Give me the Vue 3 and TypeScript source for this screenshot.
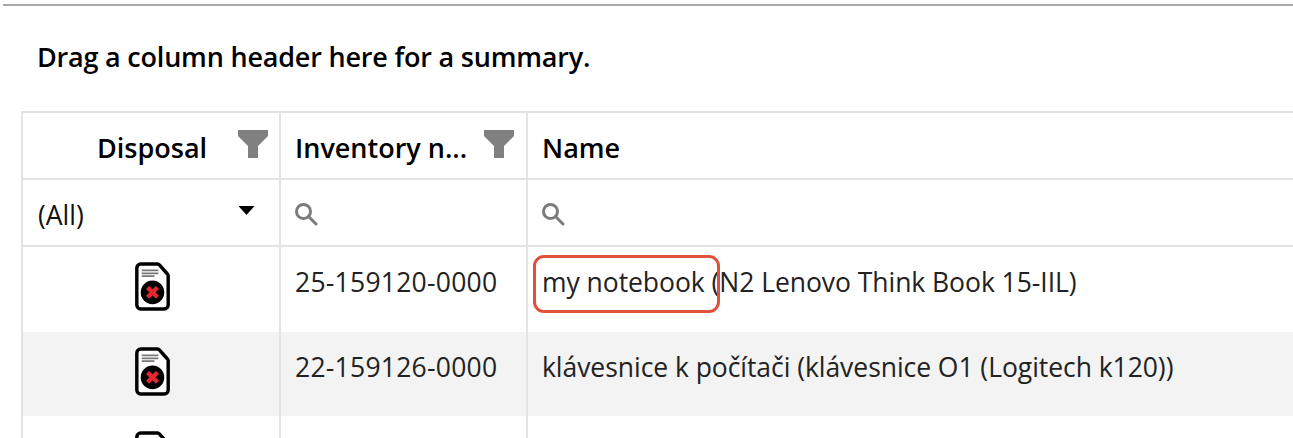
<script setup lang="ts">
interface Row {
  inventory: string;
  name: string;
  marked?: string;
}

const rows: Row[] = [
  { inventory: "25-159120-0000", marked: "my notebook", name: " (N2 Lenovo Think Book 15-IIL)" },
  { inventory: "22-159126-0000", name: "klávesnice k počítači (klávesnice O1 (Logitech k120))" },
  { inventory: "", name: "" },
];
</script>

<template>
  <div class="page">
    <div class="top-rule" />
    <div class="group-panel">Drag a column header here for a summary.</div>

    <div class="grid">
      <div class="cell head head--center">
        <span class="head__label">Disposal</span>
        <svg class="funnel" viewBox="0 0 30 30"><path d="M0 1h30v6L20 17v12H10V17L0 7z" /></svg>
      </div>
      <div class="cell head">
        <span class="head__label">Inventory n...</span>
        <svg class="funnel" viewBox="0 0 30 30"><path d="M0 1h30v6L20 17v12H10V17L0 7z" /></svg>
      </div>
      <div class="cell head head--last"><span class="head__label">Name</span></div>

      <div class="cell filter filter--select">
        <span class="filter__all">(All)</span>
        <svg class="caret" viewBox="0 0 16 9"><path d="M0 0h16L8 9z" /></svg>
      </div>
      <div class="cell filter">
        <svg class="search" viewBox="0 0 24 24"><circle cx="9.5" cy="9.5" r="7" /><path d="M14.5 14.5L22 22" /></svg>
      </div>
      <div class="cell filter filter--last">
        <svg class="search" viewBox="0 0 24 24"><circle cx="9.5" cy="9.5" r="7" /><path d="M14.5 14.5L22 22" /></svg>
      </div>

      <template v-for="(row, i) in rows" :key="i">
        <div class="cell body body--icon" :class="{ alt: i === 1 }">
          <svg class="doc" viewBox="0 0 36 50">
            <path class="doc__sheet" d="M6 2h17a3 3 0 0 1 2 1l8 9a3 3 0 0 1 1 2v30a4 4 0 0 1-4 4H6a4 4 0 0 1-4-4V6a4 4 0 0 1 4-4z" />
            <path class="doc__lines" d="M7 8.500h17M7 11.500h17M7 14.500h13" />
            <circle cx="18" cy="31" r="12" />
            <path class="doc__cross" d="M13 26l10 10M23 26L13 36" />
          </svg>
        </div>
        <div class="cell body body--code" :class="{ alt: i === 1 }">{{ row.inventory }}</div>
        <div class="cell body body--last" :class="{ alt: i === 1 }">
          <span class="name"><span v-if="row.marked">{{ row.marked }}</span>{{ row.name }}</span>
          <span v-if="row.marked" class="callout" />
        </div>
      </template>
    </div>
  </div>
</template>

<style>
html,
body {
  margin: 0;
  background: #fff;
  overflow: hidden;
}
</style>

<style scoped>
.page {
  width: 1293px;
  height: 438px;
  overflow: hidden;
  background: #fff;
  color: #111;
  font-family: "Open Sans", "Noto Sans", sans-serif;
}

.top-rule {
  height: 2px;
  margin: 4px 0 0 3px;
  background: #a9a9a9;
}

.group-panel {
  padding: 0 0 0 37px;
  height: 105px;
  line-height: 101px;
  font-size: 27px;
  font-weight: 600;
  letter-spacing: -0.2px;
  color: #000;
}

.grid {
  display: grid;
  grid-template-columns: 258px 247px 766px;
  grid-template-rows: 67px 67px 85px 84px 60px;
  margin-left: 21px;
  border-top: 2px solid #e3e3e3;
  border-left: 2px solid #e3e3e3;
}

.cell {
  display: flex;
  align-items: center;
  box-sizing: border-box;
  border-right: 2px solid #e3e3e3;
  min-width: 0;
}

.head,
.filter {
  border-bottom: 2px solid #e3e3e3;
}

.head--last,
.filter--last,
.body--last {
  border-right: 0;
}

.head {
  padding: 3px 12px 0 14px;
  justify-content: space-between;
  font-size: 27px;
  font-weight: 600;
  color: #000;
}

.head--center {
  padding-left: 74px;
  padding-right: 11px;
}

.funnel {
  flex: none;
  width: 30px;
  height: 30px;
  margin-top: -6px;
  fill: #808080;
}

.filter {
  padding: 4px 13px 0;
  font-size: 26.500px;
}

.filter--select {
  padding-left: 15px;
  padding-right: 24px;
}

.filter__all {
  flex: 1;
}

.caret {
  flex: none;
  width: 17px;
  height: 9px;
  margin-top: -8px;
  fill: #000;
}

.search {
  width: 24px;
  height: 24px;
  margin-top: -2px;
  fill: none;
  stroke: #7b7b7b;
  stroke-width: 3;
  stroke-linecap: round;
}

.body {
  position: relative;
  align-items: flex-start;
  padding: 17px 14px 0;
  font-size: 26.500px;
  line-height: 36px;
  letter-spacing: -0.05px;
  white-space: pre;
  color: #222;
}

.body--code {
  letter-spacing: 0.25px;
}

.body--icon {
  justify-content: center;
  padding: 15px 0 0 2px;
}

.alt {
  background: #f3f3f3;
}

.doc {
  width: 37px;
  height: 49px;
  fill: #000;
}

.doc__sheet {
  fill: #fff;
  stroke: #000;
  stroke-width: 3.500;
}

.doc__lines {
  fill: none;
  stroke: #777;
  stroke-width: 1.800;
}

.doc__cross {
  fill: none;
  stroke: #e8262b;
  stroke-width: 4.500;
}

.callout {
  position: absolute;
  left: 5px;
  top: 8px;
  width: 187px;
  height: 58px;
  box-sizing: border-box;
  border: 3.500px solid #e0503a;
  border-radius: 11px;
}
</style>
